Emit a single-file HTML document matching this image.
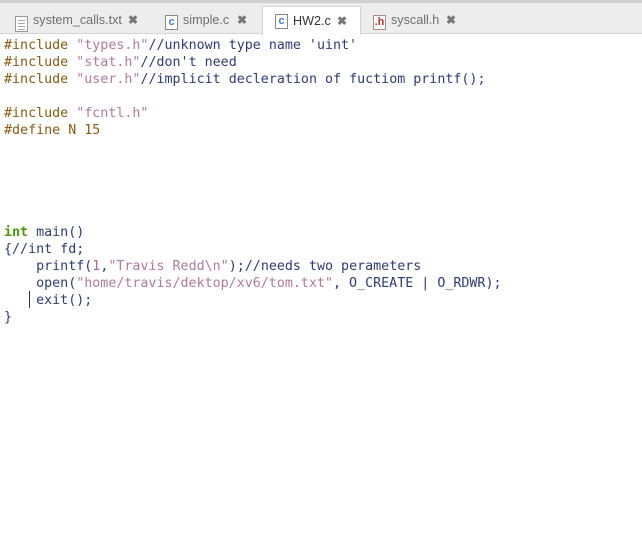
<!DOCTYPE html>
<html><head><style>
body{margin:0;width:642px;height:536px;background:#fff;overflow:hidden;position:relative;font-family:"Liberation Sans",sans-serif}
.top{position:absolute;left:0;top:0;width:642px;height:3px;background:#d0d0d0}
.bar{position:absolute;left:0;top:3px;width:642px;height:30px;background:#ededed;border-bottom:1px solid #d4d4d4}
.tab{position:absolute;top:3px;height:31px;font-size:12.6px;color:#6e6e6e;line-height:34px}
.act{background:#fff;border:1px solid #d4d4d4;border-bottom:none;top:6px;height:28px;line-height:28px;color:#333}
.x{position:absolute;font-size:12px;font-weight:bold;color:#777}
.ic{position:absolute;top:11px;width:11px;height:13px;border:1px solid #aaa;background:#fff;font-size:11px;font-weight:bold;line-height:13px;text-align:center}
pre{position:absolute;left:4px;top:37px;margin:0;font-family:"DejaVu Sans Mono",monospace;font-size:13.33px;line-height:17px;color:#2e3c76}
.p{color:#8a5a10}.s{color:#b07aa0}.k{color:#4e9a06;font-weight:bold}.n{color:#a06aa0}
.cur{position:absolute;left:29px;top:291px;width:1px;height:17px;background:#333}
</style></head><body>
<div class="top"></div><div class="bar"></div>
<div class="tab" style="left:0;width:150px">
 <div class="ic" style="left:15px;top:13px;height:14px;border-color:#999"><div style="margin:3px 2px;height:1px;background:#aaa;box-shadow:0 3px #aaa,0 6px #aaa,0 9px #aaa"></div></div>
 <span style="position:absolute;left:33px;top:0">system_calls.txt</span><span class="x" style="left:128px;top:0">✖</span></div>
<div class="tab" style="left:160px;width:100px">
 <div class="ic" style="left:5px;top:12px;color:#3a7bd5;border-color:#888">c</div>
 <span style="position:absolute;left:23px;top:0">simple.c</span><span class="x" style="left:77px;top:0">✖</span></div>
<div class="tab act" style="left:262px;width:97px">
 <div class="ic" style="left:12px;top:7px;color:#3a7bd5;border-color:#888">c</div>
 <span style="position:absolute;left:30px">HW2.c</span><span class="x" style="left:74px">✖</span></div>
<div class="tab" style="left:370px;width:100px">
 <div class="ic" style="left:3px;top:12px;color:#d03030;border-color:#a88">.h</div>
 <span style="position:absolute;left:21px;top:0">syscall.h</span><span class="x" style="left:76px;top:0">✖</span></div>
<pre><span class="p">#include</span> <span class="s">"types.h"</span>//unknown type name 'uint'
<span class="p">#include</span> <span class="s">"stat.h"</span>//don't need
<span class="p">#include</span> <span class="s">"user.h"</span>//implicit decleration of fuctiom printf();

<span class="p">#include</span> <span class="s">"fcntl.h"</span>
<span class="p">#define N 15</span>





<span class="k">int</span> main()
{//int fd;
    printf(<span class="n">1</span>,<span class="s">"Travis Redd\n"</span>);//needs two perameters
    open(<span class="s">"home/travis/dektop/xv6/tom.txt"</span>, O_CREATE | O_RDWR);
    exit();
}</pre>
<div class="cur"></div>
</body></html>
